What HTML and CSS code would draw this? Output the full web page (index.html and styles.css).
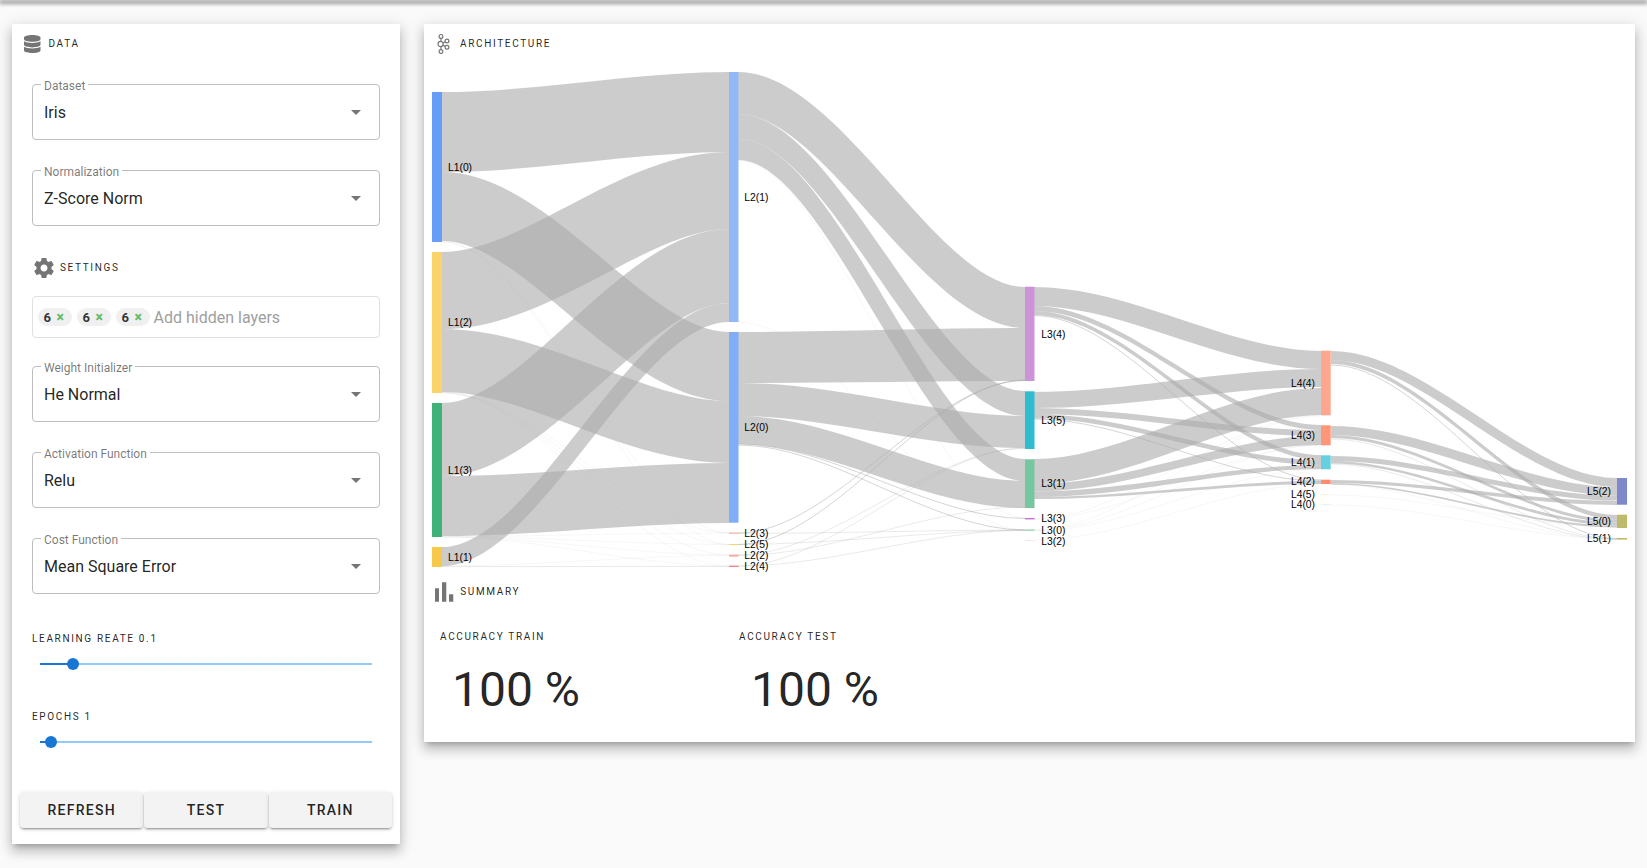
FILE: index.html
```html
<!DOCTYPE html>
<html lang="en">
<head>
<meta charset="utf-8">
<title>Neural network playground</title>
<link rel="stylesheet" href="styles.css">
</head>
<body>
<div class="topbar"></div>
<main class="layout">
  <section class="card side">
    <header class="head">
      <svg class="icon-db" viewBox="0 0 448 512" preserveAspectRatio="none"><path d="M448 73.143v45.714C448 159.143 347.667 192 224 192S0 159.143 0 118.857V73.143C0 32.857 100.333 0 224 0s224 32.857 224 73.143zM448 176v102.857C448 319.143 347.667 352 224 352S0 319.143 0 278.857V176c48.125 33.143 136.208 48.572 224 48.572S399.874 209.143 448 176zm0 160v102.857C448 479.143 347.667 512 224 512S0 479.143 0 438.857V336c48.125 33.143 136.208 48.572 224 48.572S399.874 369.143 448 336z"/></svg>
      <span class="overline">Data</span>
    </header>
    <div class="fields first">
      <div class="field"><span class="field-label">Dataset</span><span class="field-value">Iris</span><i class="caret"></i></div>
      <div class="field"><span class="field-label">Normalization</span><span class="field-value">Z-Score Norm</span><i class="caret"></i></div>
    </div>
    <header class="head head-settings">
      <svg class="icon-gear" viewBox="0 0 24 24"><path d="M19.43 12.98c.04-.32.07-.64.07-.98s-.03-.66-.07-.98l2.11-1.65c.19-.15.24-.42.12-.64l-2-3.46c-.12-.22-.39-.3-.61-.22l-2.49 1c-.52-.4-1.08-.73-1.69-.98l-.38-2.65C14.46 2.18 14.25 2 14 2h-4c-.25 0-.46.18-.49.42l-.38 2.65c-.61.25-1.17.59-1.69.98l-2.49-1c-.23-.09-.49 0-.61.22l-2 3.46c-.13.22-.07.49.12.64l2.11 1.65c-.04.32-.07.65-.07.98s.03.66.07.98l-2.11 1.65c-.19.15-.24.42-.12.64l2 3.46c.12.22.39.3.61.22l2.49-1c.52.4 1.08.73 1.69.98l.38 2.65c.03.24.24.42.49.42h4c.25 0 .46-.18.49-.42l.38-2.65c.61-.25 1.17-.59 1.69-.98l2.49 1c.23.09.49 0 .61-.22l2-3.46c.12-.22.07-.49-.12-.64l-2.11-1.65zM12 15.5c-1.93 0-3.5-1.57-3.5-3.5s1.57-3.5 3.5-3.5 3.5 1.57 3.5 3.5-1.57 3.5-3.5 3.5z"/></svg>
      <span class="overline">Settings</span>
    </header>
    <div class="fields">
      <div class="chips">
        <span class="chip">6 <b>×</b></span>
        <span class="chip">6 <b>×</b></span>
        <span class="chip">6 <b>×</b></span>
        <span class="placeholder">Add hidden layers</span>
      </div>
      <div class="field field-gap"><span class="field-label">Weight Initializer</span><span class="field-value">He Normal</span><i class="caret"></i></div>
      <div class="field"><span class="field-label">Activation Function</span><span class="field-value">Relu</span><i class="caret"></i></div>
      <div class="field"><span class="field-label">Cost Function</span><span class="field-value">Mean Square Error</span><i class="caret"></i></div>
    </div>
    <div class="sliders">
      <div class="overline slider-label">Learning Reate 0.1</div>
      <div class="slider"><div class="slider-fill" style="width:9.85%"></div><i class="slider-thumb" style="left:9.85%"></i></div>
      <div class="overline slider-label">Epochs 1</div>
      <div class="slider"><div class="slider-fill" style="width:3.2%"></div><i class="slider-thumb" style="left:3.2%"></i></div>
    </div>
    <div class="buttons">
      <button class="btn">Refresh</button>
      <button class="btn">Test</button>
      <button class="btn">Train</button>
    </div>
  </section>

  <section class="card main-card">
    <header class="head head-arch">
      <svg class="icon-arch" viewBox="0 0 14 20"><g fill="none" stroke="#757575" stroke-width="1.2"><circle cx="5" cy="2.4" r="1.9"/><circle cx="11" cy="7" r="1.9"/><circle cx="4.6" cy="10" r="2.6"/><circle cx="11" cy="13.2" r="1.9"/><circle cx="5" cy="17.6" r="1.9"/><path d="M5 4.3V7.4M5 12.6V15.7M7 8.8 9.3 7.8M7 11.2 9.3 12.4"/></g></svg>
      <span class="overline">Architecture</span>
    </header>
    <svg class="sankey" viewBox="424 64 1211 510">
      <g class="thin t1">
        <path d="M738 444C833 444 930 518.5 1025 518.5"/>
        <path d="M738 445C833 445 930 530 1025 530"/>
        <path d="M738 533C833 533 930 380.5 1025 380.5"/>
        <path d="M738 544.5C833 544.5 930 380 1025 380"/>
        <path d="M1034 315.5C1129 315.5 1226 480 1321 480"/>
        <path d="M1034 419C1129 419 1226 481 1321 481"/>
        <path d="M1331 365C1425 365 1523 538.5 1617 538.5"/>
      </g>
      <g class="thin t2">
        <path d="M442 566.6C537 566.6 634 566.4 729 566.4"/>
        <path d="M738 555C833 555 930 448.5 1025 448.5"/>
        <path d="M738 566C833 566 930 448 1025 448"/>
        <path d="M738 533.5C833 533.5 930 530 1025 530"/>
        <path d="M738 544.5C833 544.5 930 530.5 1025 530.5"/>
        <path d="M738 566C833 566 930 530 1025 530"/>
        <path d="M738 555.5C833 555.5 930 507 1025 507"/>
        <path d="M1331 439C1425 439 1523 539 1617 539"/>
        <path d="M1331 464C1425 464 1523 539.5 1617 539.5"/>
      </g>
      <g class="thin t3">
        <path d="M442 241.5C537 241.5 634 533 729 533"/>
        <path d="M442 241.8C537 241.8 634 544.5 729 544.5"/>
        <path d="M442 392C537 392 634 533 729 533"/>
        <path d="M442 392.4C537 392.4 634 544.5 729 544.5"/>
        <path d="M442 392.6C537 392.6 634 555 729 555"/>
        <path d="M442 392.8C537 392.8 634 566 729 566"/>
        <path d="M442 536.5C537 536.5 634 533 729 533"/>
        <path d="M442 536.6C537 536.6 634 544.5 729 544.5"/>
        <path d="M442 536.8C537 536.8 634 555 729 555"/>
        <path d="M442 537C537 537 634 566 729 566"/>
        <path d="M442 566C537 566 634 555.5 729 555.5"/>
        <path d="M738 160.5C833 160.5 930 518 1025 518"/>
        <path d="M738 322C833 322 930 530 1025 530"/>
        <path d="M1034 519C1129 519 1226 415 1321 415"/>
        <path d="M1034 519.5C1129 519.5 1226 445 1321 445"/>
        <path d="M1034 530C1129 530 1226 416 1321 416"/>
        <path d="M1034 530.5C1129 530.5 1226 445 1321 445"/>
        <path d="M1034 531C1129 531 1226 469 1321 469"/>
        <path d="M1034 540C1129 540 1226 484 1321 484"/>
        <path d="M1331 484.5C1425 484.5 1523 539.5 1617 539.5"/>
        <path d="M1331 495C1425 495 1523 527 1617 527"/>
        <path d="M1331 505C1425 505 1523 539 1617 539"/>
      </g>
      <g class="links">
        <path d="M442 92C537 92 634 72 729 72L729 152C634 152 537 172 442 172Z"/>
        <path d="M442 172C549 172 646 332 729 332L729 401C622 401 525 241 442 241Z"/>
        <path d="M442 252C524 252 621 152 729 152L729 229C647 229 550 329 442 329Z"/>
        <path d="M442 329C547 329 644 401 729 401L729 463C624 463 527 392 442 392Z"/>
        <path d="M442 403C525 403 622 229 729 229L729 303C646 303 549 476 442 476Z"/>
        <path d="M442 476C537 476 634 463 729 463L729 523C634 523 537 536 442 536Z"/>
        <path d="M442 547C534 547 631 303 729 303L729 322C637 322 540 566 442 566Z"/>
        <path d="M738 72C840 72 937 287 1025 287L1025 328C923 328 826 114 738 114Z"/>
        <path d="M738 114C837 114 934 391 1025 391L1025 416C926 416 829 139 738 139Z"/>
        <path d="M738 139C837 139 934 459 1025 459L1025 481C926 481 829 160 738 160Z"/>
        <path d="M738 332C833 332 930 328 1025 328L1025 381C930 381 833 383 738 383Z"/>
        <path d="M738 383C838 383 935 416 1025 416L1025 448C925 448 828 416 738 416Z"/>
        <path d="M738 416C838 416 935 481 1025 481L1025 508C925 508 828 444 738 444Z"/>
        <path d="M1034 287C1132 287 1229 351 1321 351L1321 369C1223 369 1126 306 1034 306Z"/>
        <path d="M1034 306C1129 306 1226 425 1321 425L1321 430C1226 430 1129 311 1034 311Z"/>
        <path d="M1034 311C1129 311 1226 455 1321 455L1321 460C1226 460 1129 315 1034 315Z"/>
        <path d="M1034 392C1126 392 1223 369 1321 369L1321 387C1229 387 1132 408 1034 408Z"/>
        <path d="M1034 408C1129 408 1226 430 1321 430L1321 436C1226 436 1129 414 1034 414Z"/>
        <path d="M1034 414C1129 414 1226 460 1321 460L1321 465C1226 465 1129 418.5 1034 418.5Z"/>
        <path d="M1034 459C1125 459 1222 388 1321 388L1321 415C1230 415 1133 484 1034 484Z"/>
        <path d="M1034 484C1129 484 1226 436 1321 436L1321 445C1226 445 1129 491.5 1034 491.5Z"/>
        <path d="M1034 491.5C1129 491.5 1226 465 1321 465L1321 469C1226 469 1129 497 1034 497Z"/>
        <path d="M1034 497C1129 497 1226 481 1321 481L1321 484C1226 484 1129 499 1034 499Z"/>
        <path d="M1331 351C1427 351 1525 478 1617 478L1617 487C1521 487 1423 360 1331 360Z"/>
        <path d="M1331 360C1425 360 1523 515 1617 515L1617 519.5C1523 519.5 1425 364 1331 364Z"/>
        <path d="M1331 426C1427 426 1525 487 1617 487L1617 495.5C1521 495.5 1423 435 1331 435Z"/>
        <path d="M1331 435C1425 435 1523 519.5 1617 519.5L1617 522.5C1523 522.5 1425 438 1331 438Z"/>
        <path d="M1331 456C1425 456 1523 495.5 1617 495.5L1617 500.5C1523 500.5 1425 461 1331 461Z"/>
        <path d="M1331 461C1425 461 1523 522.5 1617 522.5L1617 525.5C1523 525.5 1425 463.5 1331 463.5Z"/>
        <path d="M1331 480C1425 480 1523 501 1617 501L1617 505C1523 505 1425 483 1331 483Z"/>
        <path d="M1331 483C1425 483 1523 525.5 1617 525.5L1617 527.5C1523 527.5 1425 484.5 1331 484.5Z"/>
      </g>
      <g class="nodes">
        <rect class="n-a" x="432" y="92" width="10" height="150"/>
        <rect class="n-b" x="432" y="252" width="10" height="141"/>
        <rect class="n-c" x="432" y="403" width="10" height="134"/>
        <rect class="n-d" x="432" y="547" width="10" height="20"/>
        <rect class="n-e" x="729" y="72" width="9.5" height="250"/>
        <rect class="n-f" x="729" y="332" width="9.5" height="190.7"/>
        <rect class="n-g" x="729" y="532.6" width="9.5" height="1"/>
        <rect class="n-h" x="729" y="544" width="9.5" height="1"/>
        <rect class="n-i" x="729" y="554.6" width="9.5" height="2"/>
        <rect class="n-j" x="729" y="565.6" width="9.5" height="1.4"/>
        <rect class="n-k" x="1025" y="286.7" width="9.5" height="94.3"/>
        <rect class="n-l" x="1025" y="391.3" width="9.5" height="57.7"/>
        <rect class="n-m" x="1025" y="459.3" width="9.5" height="48.7"/>
        <rect class="n-n" x="1025" y="518" width="9.5" height="1.4"/>
        <rect class="n-o" x="1025" y="529.4" width="9.5" height="1.4"/>
        <rect class="n-p" x="1025" y="540" width="9.5" height="0.7"/>
        <rect class="n-q" x="1321" y="350.7" width="9.7" height="64.6"/>
        <rect class="n-r" x="1321" y="425.3" width="9.7" height="20"/>
        <rect class="n-s" x="1321" y="455.3" width="9.7" height="14"/>
        <rect class="n-t" x="1321" y="479.7" width="9.7" height="4.3"/>
        <rect class="n-u" x="1321" y="494.4" width="9.7" height="0.7"/>
        <rect class="n-v" x="1321" y="504.4" width="9.7" height="0.7"/>
        <rect class="n-w" x="1617" y="478" width="10" height="26.7"/>
        <rect class="n-x" x="1617" y="514.7" width="10" height="13.3"/>
        <rect class="n-x" x="1617" y="538" width="10" height="1.6"/>
      </g>
      <g class="labels">
        <text x="448" y="171.4">L1(0)</text>
        <text x="448" y="326">L1(2)</text>
        <text x="448" y="474.4">L1(3)</text>
        <text x="448" y="561.4">L1(1)</text>
        <text x="744.3" y="201.4">L2(1)</text>
        <text x="744.3" y="431.4">L2(0)</text>
        <text x="744.3" y="537.4">L2(3)</text>
        <text x="744.3" y="548.4">L2(5)</text>
        <text x="744.3" y="559.4">L2(2)</text>
        <text x="744.3" y="570.4">L2(4)</text>
        <text x="1041.3" y="338.4">L3(4)</text>
        <text x="1041.3" y="424.4">L3(5)</text>
        <text x="1041.3" y="487.4">L3(1)</text>
        <text x="1041.3" y="522.4">L3(3)</text>
        <text x="1041.3" y="534.4">L3(0)</text>
        <text x="1041.3" y="544.7">L3(2)</text>
        <text class="end" x="1315" y="387.4">L4(4)</text>
        <text class="end" x="1315" y="439.4">L4(3)</text>
        <text class="end" x="1315" y="466">L4(1)</text>
        <text class="end" x="1315" y="485.4">L4(2)</text>
        <text class="end" x="1315" y="498.4">L4(5)</text>
        <text class="end" x="1315" y="508.4">L4(0)</text>
        <text class="end" x="1611" y="495.4">L5(2)</text>
        <text class="end" x="1611" y="525.4">L5(0)</text>
        <text class="end" x="1611" y="542.3">L5(1)</text>
      </g>
    </svg>
    <header class="head head-summary">
      <svg class="icon-bars" viewBox="0 0 19 20"><path d="M0 6.3h4V19.7H0zM7 .3h4.3V19.7H7zM14 12.3h4.3V19.7H14z"/></svg>
      <span class="overline">Summary</span>
    </header>
    <div class="stats">
      <div class="stat"><div class="overline stat-label">Accuracy Train</div><div class="stat-value">100 %</div></div>
      <div class="stat"><div class="overline stat-label">Accuracy Test</div><div class="stat-value">100 %</div></div>
    </div>
  </section>
</main>
</body>
</html>
```
FILE: styles.css
```css
* { box-sizing: border-box; }
html, body { margin: 0; height: 100%; }
body {
  background: #fafafa;
  font-family: Roboto, "Liberation Sans", sans-serif;
  color: rgba(0, 0, 0, 0.87);
  overflow: hidden;
}
.topbar {
  height: 0;
  box-shadow: 0 2px 4px 1px rgba(0, 0, 0, 0.75);
}
.layout {
  display: flex;
  align-items: flex-start;
  gap: 24px;
  padding: 24px 12px 0;
}
.card {
  background: #fff;
  box-shadow: 0 5px 5px -3px rgba(0,0,0,.2), 0 8px 10px 1px rgba(0,0,0,.14), 0 3px 14px 2px rgba(0,0,0,.12);
}
.side { width: 388px; height: 820px; flex: none; }
.main-card { width: 1211px; height: 718px; flex: none; }

.overline {
  font-size: 10px;
  line-height: 16px;
  letter-spacing: 1.66px;
  text-transform: uppercase;
}
.head {
  display: flex;
  align-items: center;
  height: 40px;
  padding-left: 12px;
}
.icon-db { width: 16.5px; height: 18px; fill: #757575; margin-right: 8px; }
.head-settings { height: 40px; margin-top: 22px; padding-left: 20px; }
.icon-gear { width: 24px; height: 24px; fill: #757575; margin-right: 4px; }
.head-arch { padding-left: 12px; }
.icon-arch { width: 14px; height: 20px; margin-right: 10px; }
.head-summary { height: 40px; padding-left: 10.7px; margin-top: -2px; }
.icon-bars { width: 19px; height: 20px; fill: #757575; margin-right: 6.5px; }

.fields {
  display: flex;
  flex-direction: column;
  gap: 30px;
  padding: 0 20px;
}
.fields.first { margin-top: 20px; }
.field {
  position: relative;
  display: flex;
  align-items: center;
  justify-content: space-between;
  height: 56px;
  padding: 0 18px 0 11px;
  border: 1px solid #bdbdbd;
  border-radius: 4px;
}
.field-label {
  position: absolute;
  top: -6px;
  left: 8px;
  padding: 0 3px;
  background: linear-gradient(#fff, #fff) center 5px / 100% 3px no-repeat;
  font-size: 12px;
  line-height: 14px;
  color: rgba(0, 0, 0, 0.54);
}
.field-value { font-size: 16px; line-height: 20px; margin-top: 2px; }
.caret {
  width: 0;
  height: 0;
  border-left: 5px solid transparent;
  border-right: 5px solid transparent;
  border-top: 5px solid #757575;
  margin-top: 1px;
}
.chips {
  display: flex;
  align-items: center;
  gap: 5px;
  height: 42px;
  margin-top: 8px;
  padding-left: 4.5px;
  border: 1px solid #e0e0e0;
  border-radius: 4px;
}
.chip {
  display: flex;
  align-items: center;
  justify-content: space-between;
  width: 34px;
  height: 18px;
  padding: 0 6px;
  border-radius: 9px;
  background: #f0f0f0;
  font-size: 13px;
  font-weight: 700;
  color: rgba(0, 0, 0, 0.8);
}
.chip b { color: #66bb6a; font-size: 14px; line-height: 14px; margin-right: 1.5px; }
.placeholder { font-size: 16px; color: #9e9e9e; margin-left: -1px; }
.field-gap { margin-top: -2px; }

.sliders { padding: 36px 20px 0; }
.slider-label { height: 16px; line-height: 18px; }
.slider {
  position: relative;
  display: flex;
  align-items: center;
  height: 20px;
  margin: 8px 8px 34px;
}
.slider::before {
  content: "";
  flex: 1;
  height: 2px;
  background: #90caf9;
}
.slider-fill {
  position: absolute;
  left: 0;
  height: 2px;
  background: #1976d2;
}
.slider-thumb {
  position: absolute;
  width: 12px;
  height: 12px;
  margin-left: -6px;
  border-radius: 50%;
  background: #1976d2;
}
.buttons {
  display: flex;
  gap: 1px;
  padding: 0 8px;
  margin-top: 40px;
}
.btn {
  flex: 1;
  height: 36px;
  padding: 0;
  border: 0;
  border-radius: 4px;
  background: #f3f3f3;
  font: 500 14px/36px Roboto, sans-serif;
  letter-spacing: 1.25px;
  text-transform: uppercase;
  color: rgba(0, 0, 0, 0.87);
  box-shadow: 0 3px 1px -2px rgba(0,0,0,.2), 0 2px 2px 0 rgba(0,0,0,.14), 0 1px 5px 0 rgba(0,0,0,.12);
}

.sankey { display: block; width: 1211px; height: 510px; }
.links path { fill: #ababab; fill-opacity: 0.61; }
.thin path { fill: none; stroke: #888; stroke-width: 0.7; }
.t1 path { stroke-opacity: 0.5; }
.t2 path { stroke-opacity: 0.25; }
.t3 path { stroke-opacity: 0.1; }
.labels text { font: 10.3px "Liberation Sans", Arial, sans-serif; fill: #000; }
.labels .end { text-anchor: end; }
.n-a { fill: #669df6; }
.n-b { fill: #fad36b; }
.n-c { fill: #3fb27a; }
.n-d { fill: #f7c94b; }
.n-e { fill: #93b8f8; }
.n-f { fill: #80adf7; }
.n-g { fill: #ee9a90; }
.n-h { fill: #fbd568; }
.n-i { fill: #f5aaa0; }
.n-j { fill: #ee8a80; }
.n-k { fill: #cd93d8; }
.n-l { fill: #2fbccf; }
.n-m { fill: #76c69f; }
.n-n { fill: #c96ed8; }
.n-o { fill: #9ad4b5; }
.n-p { fill: #f0d8f0; }
.n-q { fill: #ffa78e; }
.n-r { fill: #ff9678; }
.n-s { fill: #67d0e0; }
.n-t { fill: #ff8a6e; }
.n-u { fill: #f2eccb; }
.n-v { fill: #cfeef5; }
.n-w { fill: #7e88cc; }
.n-x { fill: #bdbb6b; }

.stats {
  display: flex;
  padding: 16px 0 0 16px;
}
.stat { width: 299px; }
.stat-label { height: 16px; line-height: 18px; }
.stat-value {
  margin: 18px 0 0 12px;
  font-size: 48px;
  line-height: 56px;
  font-weight: 400;
}
```
